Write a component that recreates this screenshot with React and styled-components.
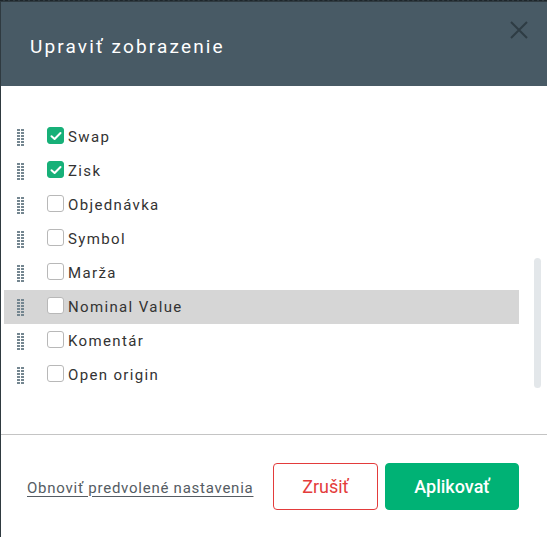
import styled, { createGlobalStyle } from 'styled-components';

const GlobalStyle = createGlobalStyle`
  html, body {
    margin: 0;
    padding: 0;
    background: #2f3a40;
  }
  body {
    font-family: Roboto, "Noto Sans", sans-serif;
  }
`;

const Backdrop = styled.div`
  width: 547px;
  height: 537px;
  overflow: hidden;
  border-top: 1px dashed #1e262b;
  box-sizing: border-box;
  padding: 1px 0 0 1px;
`;

const Modal = styled.div`
  width: 560px;
  height: 560px;
  background: #fff;
  display: flex;
  flex-direction: column;
`;

const Header = styled.div`
  height: 84px;
  background: #485a65;
  display: flex;
  align-items: center;
  justify-content: space-between;
  padding: 0 18px 0 29px;
  box-sizing: border-box;
  width: 546px;
`;

const Title = styled.h2`
  margin: 4px 0 0;
  font-size: 19px;
  font-weight: 400;
  letter-spacing: 2.15px;
  color: #fff;
`;

const CloseButton = styled.button`
  border: 0;
  background: none;
  padding: 0;
  margin-top: -28px;
  width: 20px;
  height: 20px;
  cursor: pointer;
  display: flex;
`;

const Body = styled.div`
  display: flex;
  padding: 34px 0 0 3px;
  width: 546px;
  box-sizing: border-box;
  height: 349px;
  border-bottom: 1px solid #c4c4c4;
`;

const List = styled.ul`
  list-style: none;
  margin: 0;
  padding: 0;
  width: 515px;
`;

const Row = styled.li`
  height: 34px;
  display: flex;
  align-items: center;
  padding-left: 13px;
  background: ${(p) => (p.hovered ? '#d6d6d6' : 'transparent')};
`;

const Handle = styled.span`
  display: flex;
  width: 30px;
  margin-top: 1px;
`;

const Box = styled.span`
  width: 17px;
  height: 17px;
  border-radius: 3px;
  box-sizing: border-box;
  border: 1px solid ${(p) => (p.checked ? '#17b078' : '#b8b8b8')};
  background: ${(p) => (p.checked ? '#17b078' : '#fff')};
  display: flex;
  align-items: center;
  justify-content: center;
  margin-right: 4px;
  margin-top: -3px;
`;

const Label = styled.span`
  font-size: 15px;
  letter-spacing: 1.35px;
  color: #333;
`;

const Track = styled.div`
  flex: 1;
  padding: 138px 0 0 15px;
`;

const Thumb = styled.div`
  width: 7px;
  height: 130px;
  border-radius: 4px;
  background: #e3e7ea;
`;

const Footer = styled.div`
  display: flex;
  align-items: center;
  padding: 28px 0 0 26px;
  width: 546px;
  box-sizing: border-box;
`;

const ResetLink = styled.a`
  font-size: 15px;
  letter-spacing: 0.75px;
  color: #555c63;
  text-decoration: underline;
  text-underline-offset: 3px;
  margin-right: auto;
  margin-top: 2px;
  cursor: pointer;
`;

const Button = styled.button`
  height: 47px;
  border-radius: 4px;
  font-family: inherit;
  font-size: 18px;
  cursor: pointer;
  box-sizing: border-box;
  width: ${(p) => p.w}px;
  border: 1px solid ${(p) => (p.primary ? '#00b275' : '#e33b3b')};
  background: ${(p) => (p.primary ? '#00b275' : '#fff')};
  color: ${(p) => (p.primary ? '#fff' : '#e33b3b')};
  font-weight: ${(p) => (p.primary ? 500 : 400)};
`;

const Buttons = styled.div`
  display: flex;
  gap: 7px;
  margin-right: 28px;
`;

const DragIcon = () => (
  <svg width="7" height="18" viewBox="0 0 7 18">
    {[0, 3, 6, 9, 12, 15].map((y) => (
      <g key={y} fill="#748690">
        <rect x="0" y={y} width="3" height="2" />
        <rect x="4" y={y} width="3" height="2" />
      </g>
    ))}
  </svg>
);

const Check = () => (
  <svg width="12" height="10" viewBox="0 0 12 10">
    <path d="M1.5 5.2 L4.6 8 L10.5 2" fill="none" stroke="#fff" strokeWidth="2" strokeLinecap="round" strokeLinejoin="round" />
  </svg>
);

const columns = [
  { name: 'Swap', checked: true },
  { name: 'Zisk', checked: true },
  { name: 'Objednávka' },
  { name: 'Symbol' },
  { name: 'Marža' },
  { name: 'Nominal Value', hovered: true },
  { name: 'Komentár' },
  { name: 'Open origin' },
];

export default function App() {
  return (
    <>
      <GlobalStyle />
      <Backdrop>
        <Modal>
          <Header>
            <Title>Upraviť zobrazenie</Title>
            <CloseButton aria-label="Zavrieť">
              <svg width="20" height="20" viewBox="0 0 20 20">
                <path d="M2 2 L18 18 M18 2 L2 18" stroke="#2e3c44" strokeWidth="2" />
              </svg>
            </CloseButton>
          </Header>
          <Body>
            <List>
              {columns.map((c) => (
                <Row key={c.name} hovered={c.hovered}>
                  <Handle>
                    <DragIcon />
                  </Handle>
                  <Box checked={c.checked}>{c.checked && <Check />}</Box>
                  <Label>{c.name}</Label>
                </Row>
              ))}
            </List>
            <Track>
              <Thumb />
            </Track>
          </Body>
          <Footer>
            <ResetLink>Obnoviť predvolené nastavenia</ResetLink>
            <Buttons>
              <Button w={105}>Zrušiť</Button>
              <Button primary w={134}>Aplikovať</Button>
            </Buttons>
          </Footer>
        </Modal>
      </Backdrop>
    </>
  );
}
